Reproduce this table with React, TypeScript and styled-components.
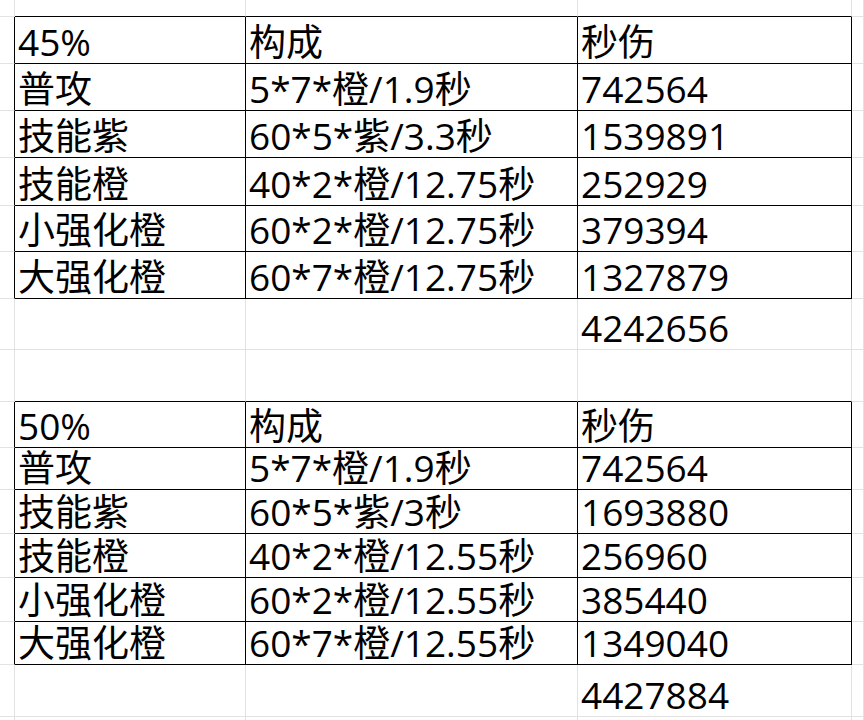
import styled, { createGlobalStyle } from "styled-components";

const GlobalStyle = createGlobalStyle`
  html, body {
    margin: 0;
    padding: 0;
    background: #ffffff;
  }
  body {
    width: 864px;
    height: 720px;
    overflow: hidden;
  }
`;

// 每行的高度 (像素), 按截图量出来的
const rowHeights = [17, 47, 47, 47, 48, 46, 47, 51, 52, 46, 42, 44, 44, 44, 43, 52, 40];

const Sheet = styled.div`
  display: grid;
  grid-template-columns: 15px 231px 332px 274px 1fr;
  grid-template-rows: ${rowHeights.map(h => `${h}px`).join(" ")};
  width: 864px;
  height: 720px;
  overflow: hidden;
  font-family: "Open Sans", "Noto Sans CJK SC", sans-serif;
  font-size: 37px;
  color: #000;
`;

const Cell = styled.div<{ $right?: boolean; $bottom?: boolean }>`
  box-sizing: border-box;
  display: flex;
  align-items: flex-end;
  padding: 0 0 3px 3px;
  line-height: 37px;
  white-space: nowrap;
  border-right: 1px solid ${props => (props.$right ? "#000" : "#e2e2e2")};
  border-bottom: 1px solid ${props => (props.$bottom ? "#000" : "#e2e2e2")};
`;

interface IRow {
  cells: string[];
  kind: "table" | "plain" | "above";
}

const table1 = [
  ["45%", "构成", "秒伤"],
  ["普攻", "5*7*橙/1.9秒", "742564"],
  ["技能紫", "60*5*紫/3.3秒", "1539891"],
  ["技能橙", "40*2*橙/12.75秒", "252929"],
  ["小强化橙", "60*2*橙/12.75秒", "379394"],
  ["大强化橙", "60*7*橙/12.75秒", "1327879"],
];

const table2 = [
  ["50%", "构成", "秒伤"],
  ["普攻", "5*7*橙/1.9秒", "742564"],
  ["技能紫", "60*5*紫/3秒", "1693880"],
  ["技能橙", "40*2*橙/12.55秒", "256960"],
  ["小强化橙", "60*2*橙/12.55秒", "385440"],
  ["大强化橙", "60*7*橙/12.55秒", "1349040"],
];

const rows: IRow[] = [
  { cells: ["", "", ""], kind: "above" },
  ...table1.map(cells => ({ cells, kind: "table" as const })),
  { cells: ["", "", "4242656"], kind: "plain" },
  { cells: ["", "", ""], kind: "above" },
  ...table2.map(cells => ({ cells, kind: "table" as const })),
  { cells: ["", "", "4427884"], kind: "plain" },
  { cells: ["", "", ""], kind: "plain" },
];

function App() {
  return (
    <>
      <GlobalStyle />
      <Sheet>
        {rows.map((row, r) => {
          const inTable = row.kind === "table";
          return [
            <Cell key={`${r}-s`} $right={inTable} />,
            ...row.cells.map((text, c) => (
              <Cell
                key={`${r}-${c}`}
                $right={inTable}
                $bottom={inTable || row.kind === "above"}
              >
                {text}
              </Cell>
            )),
            <Cell key={`${r}-e`} />,
          ];
        })}
      </Sheet>
    </>
  );
}

export default App;
